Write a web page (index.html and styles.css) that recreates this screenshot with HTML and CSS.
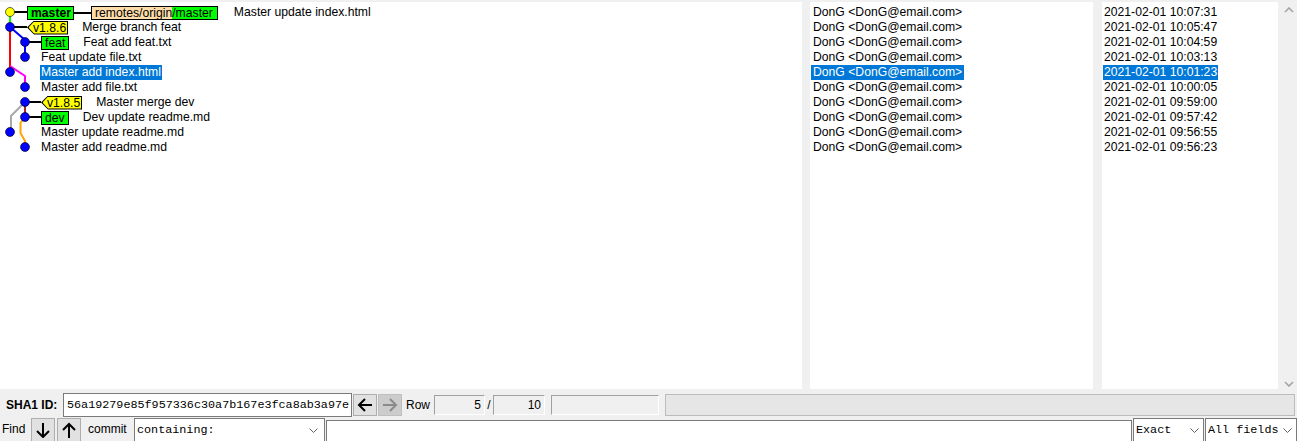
FILE: index.html
```html
<!DOCTYPE html>
<html>
<head>
<meta charset="utf-8">
<link rel="stylesheet" href="styles.css">
</head>
<body>
<div class="app">
  <div class="panes">
    <div class="pane graph-pane">
      <div class="list">
        <div class="row i27"><span class="ref head cur">master</span><span class="conn"></span><span class="ref remote"><span class="rp">remotes/origin</span><span class="rh">/master</span></span><span class="msg m16">Master update index.html</span></div>
        <div class="row i27"><span class="tag"><span class="tt">v1.8.6</span></span><span class="msg">Merge branch feat</span></div>
        <div class="row i41"><span class="ref head">feat</span><span class="msg">Feat add feat.txt</span></div>
        <div class="row i41">Feat update file.txt</div>
        <div class="row i40"><span class="sel">Master add index.html</span></div>
        <div class="row i41">Master add file.txt</div>
        <div class="row i41"><span class="tag"><span class="tt">v1.8.5</span></span><span class="msg">Master merge dev</span></div>
        <div class="row i41"><span class="ref head">dev</span><span class="msg">Dev update readme.md</span></div>
        <div class="row i41">Master update readme.md</div>
        <div class="row i41">Master add readme.md</div>
      </div>
      <svg class="graph-svg" width="44" height="160" viewBox="0 2 44 160">
        <g fill="none" stroke-width="2">
          <polyline points="10,12 10,27" stroke="#00ff00"/>
          <polyline points="10,27 10,72" stroke="#ff0000"/>
          <polyline points="10,27 25,40 25,57" stroke="#0000ff"/>
          <polyline points="10,66 25,76 25,87" stroke="#ff00ff"/>
          <polyline points="25,102 25,117" stroke="#a52a2a"/>
          <polyline points="25,102 11,116 11,132" stroke="#a9a9a9"/>
          <polyline points="24,118 20.5,123 20.5,133 25,141 25,147" stroke="#ffa500"/>
          <g stroke="#000">
            <line x1="10" y1="12" x2="27" y2="12"/>
            <line x1="10" y1="27" x2="27" y2="27"/>
            <line x1="25" y1="42" x2="41" y2="42"/>
            <line x1="25" y1="102" x2="41" y2="102"/>
            <line x1="25" y1="117" x2="41" y2="117"/>
          </g>
        </g>
        <g stroke="#000" stroke-width="0.6" fill="#0000ff">
          <circle cx="10" cy="12" r="4.5" fill="#ffff00"/>
          <circle cx="10" cy="27" r="4.5"/>
          <circle cx="25" cy="42" r="4.5"/>
          <circle cx="25" cy="57" r="4.5"/>
          <circle cx="10" cy="72" r="4.5"/>
          <circle cx="25" cy="87" r="4.5"/>
          <circle cx="25" cy="102" r="4.5"/>
          <circle cx="25" cy="117" r="4.5"/>
          <circle cx="10" cy="132" r="4.5"/>
          <circle cx="25" cy="147" r="4.5"/>
        </g>
      </svg>
    </div>
    <div class="pane author-pane">
      <div class="list">
        <div class="row"><span class="cell">DonG &lt;DonG@email.com&gt;</span></div>
        <div class="row"><span class="cell">DonG &lt;DonG@email.com&gt;</span></div>
        <div class="row"><span class="cell">DonG &lt;DonG@email.com&gt;</span></div>
        <div class="row"><span class="cell">DonG &lt;DonG@email.com&gt;</span></div>
        <div class="row"><span class="cell sel">DonG &lt;DonG@email.com&gt;</span></div>
        <div class="row"><span class="cell">DonG &lt;DonG@email.com&gt;</span></div>
        <div class="row"><span class="cell">DonG &lt;DonG@email.com&gt;</span></div>
        <div class="row"><span class="cell">DonG &lt;DonG@email.com&gt;</span></div>
        <div class="row"><span class="cell">DonG &lt;DonG@email.com&gt;</span></div>
        <div class="row"><span class="cell">DonG &lt;DonG@email.com&gt;</span></div>
      </div>
    </div>
    <div class="pane date-pane">
      <div class="list">
        <div class="row"><span class="cell">2021-02-01 10:07:31</span></div>
        <div class="row"><span class="cell">2021-02-01 10:05:47</span></div>
        <div class="row"><span class="cell">2021-02-01 10:04:59</span></div>
        <div class="row"><span class="cell">2021-02-01 10:03:13</span></div>
        <div class="row"><span class="cell sel">2021-02-01 10:01:23</span></div>
        <div class="row"><span class="cell">2021-02-01 10:00:05</span></div>
        <div class="row"><span class="cell">2021-02-01 09:59:00</span></div>
        <div class="row"><span class="cell">2021-02-01 09:57:42</span></div>
        <div class="row"><span class="cell">2021-02-01 09:56:55</span></div>
        <div class="row"><span class="cell">2021-02-01 09:56:23</span></div>
      </div>
    </div>
    <div class="scrollbar">
      <svg width="10" height="6" viewBox="0 0 10 6"><polyline points="1,5 5,1 9,5" fill="none" stroke="#a3a3a3" stroke-width="1.6"/></svg>
      <svg width="10" height="6" viewBox="0 0 10 6"><polyline points="1,1 5,5 9,1" fill="none" stroke="#a3a3a3" stroke-width="1.6"/></svg>
    </div>
  </div>

  <div class="sha-row">
    <span class="sha-label">SHA1 ID:</span>
    <span class="entry sha-entry">56a19279e85f957336c30a7b167e3fca8ab3a97e</span>
    <span class="btn">
      <svg width="16" height="14" viewBox="0 0 16 14"><g fill="none" stroke="#000" stroke-width="2"><line x1="2" y1="7" x2="15" y2="7"/><polyline points="8,1 2,7 8,13"/></g></svg>
    </span>
    <span class="btn disabled">
      <svg width="16" height="14" viewBox="0 0 16 14"><g fill="none" stroke="#8a8a8a" stroke-width="2"><line x1="1" y1="7" x2="14" y2="7"/><polyline points="8,1 14,7 8,13"/></g></svg>
    </span>
    <span class="row-label">Row</span>
    <span class="sunken f1">5</span>
    <span class="slash">/</span>
    <span class="sunken f2">10</span>
    <span class="sunken f3"></span>
    <span class="progress"></span>
  </div>

  <div class="find-row">
    <span class="find-label">Find</span>
    <span class="btn fbtn">
      <svg width="14" height="16" viewBox="0 0 14 16"><g fill="none" stroke="#000" stroke-width="2"><line x1="7" y1="1" x2="7" y2="15"/><polyline points="1,9 7,15 13,9"/></g></svg>
    </span>
    <span class="btn fbtn">
      <svg width="14" height="16" viewBox="0 0 14 16"><g fill="none" stroke="#000" stroke-width="2"><line x1="7" y1="2" x2="7" y2="16"/><polyline points="1,8 7,2 13,8"/></g></svg>
    </span>
    <span class="commit-label">commit</span>
    <span class="combo c-type"><span class="ctext">containing:</span><svg width="9" height="5" viewBox="0 0 9 5"><polyline points="0.5,0.5 4.5,4.5 8.5,0.5" fill="none" stroke="#606060" stroke-width="1"/></svg></span>
    <span class="entry find-entry"></span>
    <span class="combo c-exact"><span class="ctext">Exact</span><svg width="9" height="5" viewBox="0 0 9 5"><polyline points="0.5,0.5 4.5,4.5 8.5,0.5" fill="none" stroke="#606060" stroke-width="1"/></svg></span>
    <span class="combo c-fields"><span class="ctext">All fields</span><svg width="9" height="5" viewBox="0 0 9 5"><polyline points="0.5,0.5 4.5,4.5 8.5,0.5" fill="none" stroke="#606060" stroke-width="1"/></svg></span>
  </div>
</div>
</body>
</html>
```

FILE: styles.css
```css
html, body {
  margin: 0;
  padding: 0;
}
body {
  background: #f0f0f0;
  font-family: "Liberation Sans", Arial, sans-serif;
  font-size: 12px;
  color: #000;
  width: 1297px;
  height: 441px;
  overflow: hidden;
}
.app {
  display: flex;
  flex-direction: column;
}
.panes {
  display: flex;
  height: 389px;
  padding-top: 2px;
  box-sizing: border-box;
}
.pane {
  position: relative;
  background: #fff;
  height: 100%;
  overflow: hidden;
  font-size: 12.2px;
}
.graph-pane { width: 802px; }
.author-pane { width: 283px; margin-left: 8px; }
.date-pane { width: 176px; margin-left: 9px; }
.list {
  padding-top: 3px;
}
.row {
  display: flex;
  align-items: center;
  height: 15px;
  line-height: 15px;
  white-space: nowrap;
}
.i27 { padding-left: 27px; }
.i40 { padding-left: 40px; }
.i41 { padding-left: 41px; }

.ref {
  display: flex;
  align-items: center;
  box-sizing: border-box;
  height: 14px;
  line-height: 12px;
  border: 1px solid #000;
}
.head {
  background: #00ff00;
  padding: 0 3px;
}
.cur { font-weight: bold; padding: 0 2px 0 3px; }
.conn {
  width: 17px;
  height: 2px;
  background: #000;
}
.remote .rp {
  background: #ffddaa;
  padding: 0 0 0 3px;
  height: 12px;
}
.remote .rh {
  background: #00ff00;
  padding: 0 4px 0 0;
  height: 12px;
}
.tag {
  position: relative;
  display: flex;
  align-items: center;
  height: 14px;
  line-height: 12px;
  padding: 0 2px 0 6px;
  background: #000;
  clip-path: polygon(7px 0, 100% 0, 100% 100%, 7px 100%, 0 50%);
}
.tag::before {
  content: "";
  position: absolute;
  top: 1px;
  bottom: 1px;
  left: 1.5px;
  right: 1px;
  background: #ffff00;
  clip-path: polygon(5.6px 0, 100% 0, 100% 100%, 5.6px 100%, 0 50%);
}
.tag .tt { position: relative; }
.msg { margin-left: 14px; }
.m16 { margin-left: 16px; }
.sel {
  background: #0078d7;
  color: #fff;
  padding: 0 1px;
  height: 15px;
}
.graph-svg {
  position: absolute;
  left: 0;
  top: 0;
}
.author-pane .row { padding-left: 1px; }
.author-pane .cell { padding: 0 2px; }
.date-pane .row { padding-left: 1px; }
.date-pane .cell { padding: 0 1px; }

.scrollbar {
  flex: 1;
  display: flex;
  flex-direction: column;
  justify-content: space-between;
  align-items: center;
  padding: 5px 0 2px 2px;
  box-sizing: border-box;
}

.sha-row {
  display: flex;
  align-items: center;
  height: 24px;
  margin-top: 4px;
}
.sha-label {
  font-weight: bold;
  margin-left: 6px;
  width: 57px;
}
.entry {
  box-sizing: border-box;
  background: #fff;
  border: 1px solid #7a7a7a;
}
.sha-entry {
  width: 289px;
  height: 24px;
  line-height: 22px;
  padding-left: 3px;
  font-family: "Liberation Mono", "Courier New", monospace;
  font-size: 11.75px;
  white-space: nowrap;
  overflow: hidden;
}
.btn {
  display: flex;
  align-items: center;
  justify-content: center;
  box-sizing: border-box;
  width: 24px;
  height: 22px;
  margin-left: 1px;
  background: #e1e1e1;
  border: 1px solid #adadad;
}
.btn.disabled {
  background: #cccccc;
  border-color: #bfbfbf;
}
.row-label {
  margin-left: 4px;
  width: 28px;
}
.sunken {
  box-sizing: border-box;
  height: 20px;
  line-height: 18px;
  border-top: 1px solid #a0a0a0;
  border-left: 1px solid #a0a0a0;
  border-bottom: 1px solid #ffffff;
  border-right: 1px solid #ffffff;
  text-align: right;
  padding-right: 3px;
}
.f1 { width: 51px; }
.slash { width: 8px; text-align: center; }
.f2 { width: 52px; }
.f3 { width: 108px; margin-left: 6px; }
.progress {
  box-sizing: border-box;
  width: 630px;
  height: 22px;
  margin-left: 6px;
  background: #e6e6e6;
  border: 1px solid #bcbcbc;
}

.find-row {
  display: flex;
  align-items: flex-start;
  height: 23px;
  margin-top: 1px;
}
.find-label {
  margin-left: 2px;
  width: 29px;
  line-height: 23px;
}
.fbtn {
  height: 24px;
  width: 24px;
  margin-left: 0;
}
.fbtn + .fbtn { margin-left: 2px; }
.commit-label {
  margin-left: 7px;
  width: 46px;
  line-height: 23px;
}
.combo {
  display: flex;
  align-items: center;
  justify-content: space-between;
  box-sizing: border-box;
  height: 24px;
  background: #fff;
  border: 1px solid #7a7a7a;
  padding: 0 6px 0 2px;
  font-family: "Liberation Mono", "Courier New", monospace;
  font-size: 11.75px;
}
.c-type { width: 191px; }
.find-entry {
  width: 806px;
  height: 22px;
  margin-left: 1px;
  margin-top: 2px;
}
.c-exact { width: 71px; margin-left: 1px; padding-right: 4px; }
.c-fields { width: 92px; margin-left: 1px; padding-right: 4px; }
```
